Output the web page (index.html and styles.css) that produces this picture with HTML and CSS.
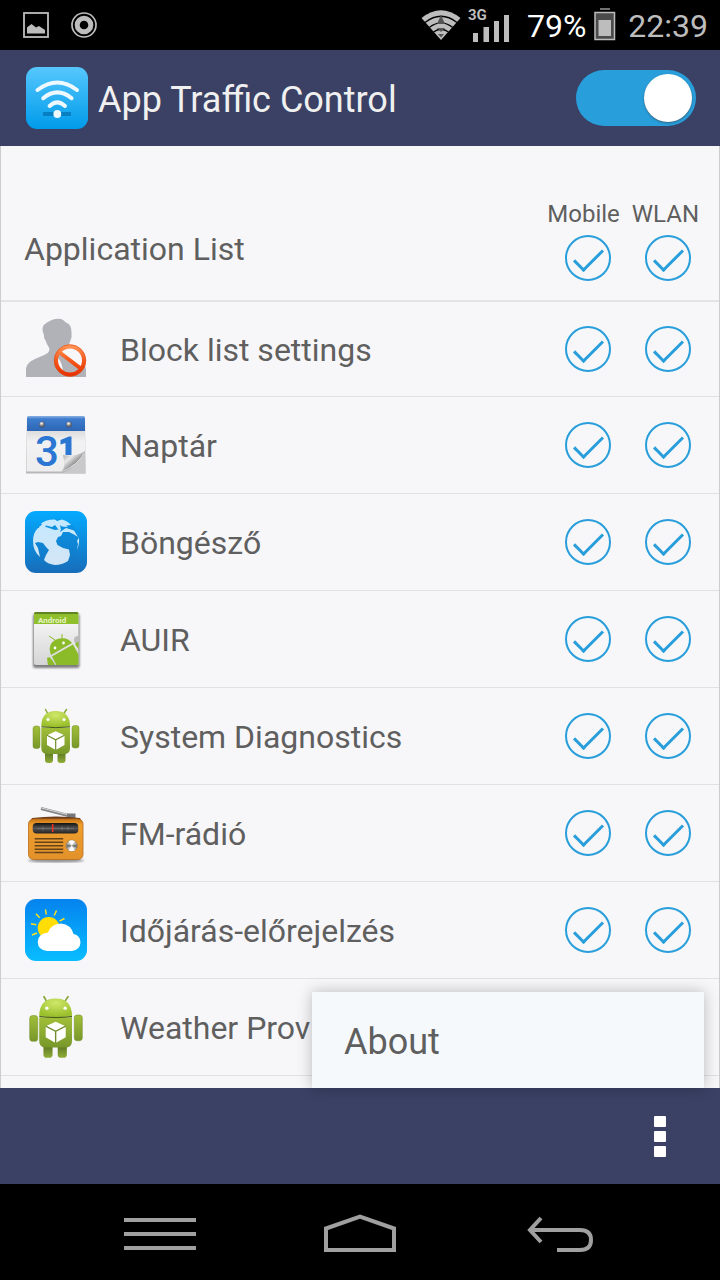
FILE: index.html
```html
<!DOCTYPE html>
<html lang="en">
<head>
<meta charset="utf-8">
<meta name="viewport" content="width=device-width, initial-scale=1">
<title>App Traffic Control</title>
<link rel="stylesheet" href="styles.css">
</head>
<body>
<div class="status">
  <div class="status-group notices">
    <svg width="26" height="26" viewBox="0 0 26 26" aria-hidden="true"><rect x="1" y="1" width="24" height="24" fill="none" stroke="#bdbdbd" stroke-width="1.8"/><path d="M4 21.500V15.500l4.500-3.500 4.500 3.500 3-1.500 6 4v3.500z" fill="#bdbdbd"/></svg>
    <svg width="26" height="26" viewBox="0 0 26 26" aria-hidden="true" fill="none" stroke="#bdbdbd"><circle cx="13" cy="13" r="12" stroke-width="1.700"/><circle cx="13" cy="13" r="6.800" stroke-width="5"/></svg>
  </div>
  <div class="status-group">
    <svg class="wifi" width="40" height="32" viewBox="0 0 40 32" aria-hidden="true">
      <path d="M.5 9Q20-6.500 39.500 9L20 31z" fill="#bdbdbd"/>
      <path d="M4 13.500Q20 1 36 13.500M8.500 18.300Q20 9.500 31.500 18.300M12.500 23Q20 17.500 27.500 23" fill="none" stroke="#000" stroke-width="1.300"/>
      <path d="M20 6l4 9h-8zM16 19h8l-4 4zM17 25h6l-3 3.500z" fill="#555"/>
    </svg>
    <svg class="signal" width="44" height="36" viewBox="0 0 44 36" aria-label="3G"><text x="1" y="13" class="net">3G</text><path d="M6 26h5v9H6zM16.500 20h5.500v15h-5.500zM27 14h5v21h-5zM37 8h5v27h-5z" fill="#bdbdbd"/></svg>
    <span class="percent">79%</span>
    <svg class="battery" width="22" height="34" viewBox="0 0 22 34" aria-hidden="true"><path d="M6 1h10" stroke="#bdbdbd" stroke-width="1.200"/><rect x="1" y="4.500" width="19.500" height="27" fill="#4b4b4b" stroke="#bdbdbd" stroke-width="1.500"/><rect x="4.500" y="12" width="12.500" height="16" fill="#bdbdbd"/></svg>
    <time class="clock">22:39</time>
  </div>
</div>

<header class="bar">
  <svg width="62" height="62" viewBox="0 0 62 62" aria-hidden="true">
    <defs><linearGradient id="gWifi" x2="0" y2="1"><stop stop-color="#56c7fd"/><stop offset="1" stop-color="#009bea"/></linearGradient></defs>
    <rect width="62" height="62" rx="11" fill="url(#gWifi)"/>
    <path d="M17 45h28v4H17z" fill="#0680c0"/>
    <path d="M11.500 23Q31.300 8 51 23M17.200 31.200Q31.300 19.500 45.600 31.200M23.600 39Q31.300 31.800 39 39" fill="none" stroke="#eef8ff" stroke-width="4" stroke-linecap="round"/>
    <circle cx="31.300" cy="47" r="3.900" fill="#eef8ff"/>
  </svg>
  <h1 class="title">App Traffic Control</h1>
  <input class="switch" type="checkbox" role="switch" aria-label="App Traffic Control" checked>
</header>

<main class="list">
  <div class="head">
    <h2 class="name">Application List</h2>
    <div class="head-checks">
      <div class="labels"><label for="all-m">Mobile</label><label for="all-w">WLAN</label></div>
      <div class="checks"><input id="all-m" class="tick" type="checkbox" checked><input id="all-w" class="tick" type="checkbox" checked></div>
    </div>
  </div>
  <ul class="rows">
    <li class="row">
      <svg class="icon" viewBox="0 0 64 64" aria-hidden="true">
        <defs><linearGradient id="gNo" x2="0" y2="1"><stop stop-color="#ff9152"/><stop offset=".5" stop-color="#f4581c"/><stop offset="1" stop-color="#e93203"/></linearGradient></defs>
        <path d="M2 60V52C3 43 15 41 22 37Q26 35 25.300 31Q22.500 27 21.500 23.500Q19.500 21 20 18.500Q16 9 23 5.500Q30 .5 37 2Q40 3 42 5.500Q47.500 7 47.500 15Q48.500 20 46 25L43.500 31Q43 36 48 38Q61 42 62 52V60z" fill="#b1b2b7"/>
        <circle cx="46" cy="43.500" r="13" fill="#f7f7fa"/>
        <path d="M32.500 40Q38 43 39 55Q44 58.500 52 55L56 53L37 36z" fill="#b1b2b7"/>
        <path d="M46 43.500m-14 0a14 14 0 1 0 28 0a14 14 0 1 0-28 0M35.700 35.500l21 16" fill="none" stroke="url(#gNo)" stroke-width="4"/>
        <circle cx="46" cy="43.500" r="15.800" fill="none" stroke="#d84a16" stroke-width=".6"/>
      </svg>
      <span class="name">Block list settings</span>
      <div class="checks"><input class="tick" type="checkbox" aria-label="Block list settings, Mobile" checked><input class="tick" type="checkbox" aria-label="Block list settings, WLAN" checked></div>
    </li>
    <li class="row">
      <svg class="icon" viewBox="0 0 64 64" aria-hidden="true">
        <defs>
          <linearGradient id="gPage" x2="0" y2="1"><stop stop-color="#d9d9da"/><stop offset=".3" stop-color="#f2f2f2"/><stop offset="1" stop-color="#ededee"/></linearGradient>
          <linearGradient id="gCurl" x2="1" y2="1"><stop stop-color="#8b8b8b"/><stop offset=".35" stop-color="#e8e8e8"/><stop offset=".6" stop-color="#8d8d8d"/><stop offset="1" stop-color="#dedede"/></linearGradient>
          <linearGradient id="gBlue" x2="0" y2="1"><stop stop-color="#8bb0e4"/><stop offset=".2" stop-color="#3d7ccd"/><stop offset="1" stop-color="#2d66b5"/></linearGradient>
          <radialGradient id="gPin" cx=".4" cy=".3"><stop stop-color="#fff"/><stop offset="1" stop-color="#666"/></radialGradient>
        </defs>
        <path d="M3 4.500Q3 3 5 3H59Q61 3 61 5L61.500 60.500H2z" fill="#b7b7b9"/>
        <path d="M3 16H61V38Q56 52 38 58.500H2.500z" fill="url(#gPage)"/>
        <path d="M3 5Q3 3 5 3H59Q61 3 61 5V18H3z" fill="url(#gBlue)"/>
        <circle cx="18" cy="11.500" r="3" fill="url(#gPin)" stroke="#24539a" stroke-width=".5"/><circle cx="45" cy="11.500" r="3" fill="url(#gPin)" stroke="#24539a" stroke-width=".5"/>
        <text x="11" y="53" class="day">3</text>
        <path d="M36.500 27L45 23.500H47.500V42H41.500V30L36.500 31.500z" fill="#2a76d2"/>
        <path d="M61 38L61.500 60.500H38Q56 52 61 38z" fill="#c9c9cb"/>
        <path d="M61 38Q52 44 39 42Q42 55 37.500 58.500Q54 52 61 38z" fill="url(#gCurl)"/>
      </svg>
      <span class="name">Naptár</span>
      <div class="checks"><input class="tick" type="checkbox" aria-label="Naptár, Mobile" checked><input class="tick" type="checkbox" aria-label="Naptár, WLAN" checked></div>
    </li>
    <li class="row">
      <svg class="icon" viewBox="0 0 64 64" aria-hidden="true">
        <defs><linearGradient id="gWeb" x2="0" y2="1"><stop stop-color="#04aaff"/><stop offset="1" stop-color="#176db9"/></linearGradient><linearGradient id="gLand" x2="0" y2="1"><stop stop-color="#c4e9ff"/><stop offset="1" stop-color="#d3e5f5"/></linearGradient></defs>
        <rect x="1" y="1" width="62" height="62" rx="11" fill="url(#gWeb)"/>
        <circle cx="32" cy="32" r="23" fill="#1279c9" opacity=".3"/>
        <path d="M15 17L18 14.500L17 13.500Q23 9 31 9.500L33 11L38 9.500Q44 11 47 15L42 15.500L44 17L38 16.500L36 15L37 20L34 19L31 15L28 17L22 15.500L20 19L15 19zM14 18L22 17L31 20L37 19L36 22L42 18L50 20.500L54 27L50 24.500L45 22L39 22L37 26L34 27L32 31L33.500 35L39 38L45 39.500L46 45L44 51Q38 55 31 55Q23 54 20 50L22 45L25 40L22 37L19 33L14 32L11 33L14 38L16 47Q9 41 9 31Q9 23 14 18zM53 31L55 27.500Q55.500 35 53 40L54 34z" fill="url(#gLand)"/>
      </svg>
      <span class="name">Böngésző</span>
      <div class="checks"><input class="tick" type="checkbox" aria-label="Böngésző, Mobile" checked><input class="tick" type="checkbox" aria-label="Böngésző, WLAN" checked></div>
    </li>
    <li class="row">
      <svg class="icon" viewBox="0 0 64 64" aria-hidden="true">
        <defs><linearGradient id="gDoc" x2="0" y2="1"><stop stop-color="#fbfbfb"/><stop offset="1" stop-color="#d4d4d4"/></linearGradient><clipPath id="cDoc"><rect x="10" y="5" width="44.500" height="53" rx="2"/></clipPath><filter id="soft"><feGaussianBlur stdDeviation="1.200"/></filter></defs>
        <rect x="9" y="7" width="46.500" height="54" rx="2" fill="#555" opacity=".75" filter="url(#soft)"/>
        <g clip-path="url(#cDoc)">
          <path d="M9 5h47v54H9z" fill="url(#gDoc)"/>
          <path d="M9 5h47v12H9z" fill="#8fc02b"/><path d="M9 5h47v2H9z" fill="#5f8421"/>
          <text x="14" y="16" class="tiny">Android</text>
          <circle cx="54" cy="33" r="4" fill="#bbb"/>
          <g fill="#8bbb28"><path d="M27 48Q23 37 32 32.500Q43 29 48 36z"/><path d="M28 49.500L49 37.500L56 50V59H33z"/><path d="M23 51Q26 49 28 53L32 59H24z"/><path d="M51 37L55 34V43z"/><path d="M31 33L25 29M38 33V27" stroke="#8bbb28"/></g>
          <circle cx="31" cy="41" r="1.400" fill="#fff"/><circle cx="39.500" cy="36" r="1.400" fill="#fff"/>
        </g>
      </svg>
      <span class="name">AUIR</span>
      <div class="checks"><input class="tick" type="checkbox" aria-label="AUIR, Mobile" checked><input class="tick" type="checkbox" aria-label="AUIR, WLAN" checked></div>
    </li>
    <li class="row">
      <svg class="icon" viewBox="0 0 64 64" aria-hidden="true">
        <defs>
          <linearGradient id="gBot" x2="0" y2="1"><stop stop-color="#a2bf38"/><stop offset="1" stop-color="#77972a"/></linearGradient>
          <radialGradient id="gHead" cx=".5" cy=".25" r=".7"><stop stop-color="#cfe76a"/><stop offset="1" stop-color="#9ac02b"/></radialGradient>
          <linearGradient id="gLeg" x2="0" y2="1"><stop stop-color="#4f681c"/><stop offset="1" stop-color="#91ae38"/></linearGradient>
          <symbol id="robot" viewBox="0 0 64 64" overflow="visible">
            <path d="M24 10L21.500 5.500M39.500 10L42.500 5.500" stroke="#8aa53a" stroke-width="1.500" stroke-linecap="round"/>
            <rect x="21" y="46" width="8" height="13" rx="3" fill="url(#gLeg)"/><rect x="33.500" y="46" width="8" height="13" rx="3" fill="url(#gLeg)"/>
            <rect x="9" y="22" width="7" height="22.500" rx="2.500" fill="url(#gBot)" stroke="#73912b" stroke-width=".5"/><rect x="48" y="21.500" width="7" height="22.500" rx="2.500" fill="url(#gBot)" stroke="#73912b" stroke-width=".5"/>
            <path d="M17.300 23.500H46V44Q46 50 40 50H23.500Q17.300 50 17.300 44z" fill="url(#gBot)"/>
            <path d="M17.300 22.500Q17.300 7 31.700 7Q46 7 46 22.500Q32 24 17.300 22.500z" fill="url(#gHead)"/>
            <path d="M17.500 22.800Q32 24.500 46 22.800" fill="none" stroke="#40551a" stroke-width="1"/>
            <circle cx="24" cy="15.500" r="1.500" fill="#fff"/><circle cx="40" cy="15.500" r="1.500" fill="#fff"/>
            <path d="M31.700 27.300L40.500 31.300V41L31.700 46L23 41V31.300z" fill="#fff"/>
            <path d="M23 31.300L31.700 35.800L40.500 31.300M31.700 35.800V46" fill="none" stroke="#6f8c2a" stroke-width="1.200"/>
          </symbol>
        </defs>
        <use href="#robot" width="64" height="64"/>
      </svg>
      <span class="name">System Diagnostics</span>
      <div class="checks"><input class="tick" type="checkbox" aria-label="System Diagnostics, Mobile" checked><input class="tick" type="checkbox" aria-label="System Diagnostics, WLAN" checked></div>
    </li>
    <li class="row">
      <svg class="icon" viewBox="0 0 64 64" aria-hidden="true">
        <defs><linearGradient id="gRad" x2="0" y2="1"><stop stop-color="#c87316"/><stop offset=".15" stop-color="#efa02d"/><stop offset="1" stop-color="#e2912a"/></linearGradient><linearGradient id="gDial" x2="0" y2="1"><stop stop-color="#111"/><stop offset=".5" stop-color="#555"/><stop offset="1" stop-color="#222"/></linearGradient></defs>
        <ellipse cx="32" cy="59.500" rx="28" ry="2" fill="#555" opacity=".65" filter="url(#soft)"/>
        <path d="M17 7.500L48 15.500" stroke="#858585" stroke-width="3"/><path d="M17.500 7L45 14" stroke="#d9d9d9" stroke-width="1"/>
        <path d="M43 12.500h8.500V17H43z" fill="#777"/><path d="M8 17Q32 14 56 17L58 21H6z" fill="#6b3b1e"/>
        <rect x="4.500" y="18" width="54.500" height="40.500" rx="5" fill="url(#gRad)" stroke="#b66c19" stroke-width=".8"/>
        <rect x="8.700" y="22" width="45.600" height="10.500" rx="4" fill="url(#gDial)"/>
        <path d="M13 27.500H50M19 25.500v4M38 25.500v4M44 25.500v4" stroke="#888" stroke-width=".5"/><path d="M28.700 23v8" stroke="#f22f24" stroke-width="1.500"/>
        <path d="M10.700 37.700h28.500M10.700 41.200h28.500M10.700 44.700h28.500M10.700 48.200h28.500M10.700 51.500h28.500" stroke="#65431b" stroke-width="1.400"/>
        <circle cx="47.700" cy="44.700" r="5.600" fill="#bcbcbc" stroke="#8c6a38" stroke-width=".6"/><path d="M47.700 44.700L44.500 40.200Q47.500 38.500 51 40.200zM47.700 44.700L44.500 49.300Q47.500 51 51 49.300z" fill="#fff"/><path d="M47.700 44.700L42.500 43v4zM47.700 44.700L53 43v4z" fill="#777"/>
      </svg>
      <span class="name">FM-rádió</span>
      <div class="checks"><input class="tick" type="checkbox" aria-label="FM-rádió, Mobile" checked><input class="tick" type="checkbox" aria-label="FM-rádió, WLAN" checked></div>
    </li>
    <li class="row">
      <svg class="icon" viewBox="0 0 64 64" aria-hidden="true">
        <defs><linearGradient id="gSky" x2="0" y2="1"><stop stop-color="#0583ef"/><stop offset="1" stop-color="#08bdff"/></linearGradient></defs>
        <rect x="1" y="1" width="62" height="62" rx="11" fill="url(#gSky)"/>
        <circle cx="24.700" cy="30" r="11" fill="#ffdd05"/>
        <path d="M21.500 11.500l.8 5M32.500 12.500l-2.300 5M12 15.800l3.600 4M40.500 20.500l-5 2.700M7 25.700l5.300 1M8 37l5-2" stroke="#ffe11b" stroke-width="1.500"/>
        <path d="M23 53Q14 52 13.700 44Q14 35.500 24 34.500Q27 26 37 25.500Q47 26.500 49.500 36Q56.500 37.500 56.500 44.500Q56 52 48 53z" fill="#fff"/>
      </svg>
      <span class="name">Időjárás-előrejelzés</span>
      <div class="checks"><input class="tick" type="checkbox" aria-label="Időjárás-előrejelzés, Mobile" checked><input class="tick" type="checkbox" aria-label="Időjárás-előrejelzés, WLAN" checked></div>
    </li>
    <li class="row">
      <svg class="icon" viewBox="4 4 56 56" aria-hidden="true"><use href="#robot" width="64" height="64"/></svg>
      <span class="name">Weather Prov</span>
      <div class="checks"><input class="tick" type="checkbox" aria-label="Weather Prov, Mobile" checked><input class="tick" type="checkbox" aria-label="Weather Prov, WLAN" checked></div>
    </li>
  </ul>
</main>

<footer class="tools">
  <div class="menu" role="menu"><button class="menu-item" role="menuitem">About</button></div>
  <button class="more" aria-label="More options"><i class="dot"></i><i class="dot"></i><i class="dot"></i></button>
</footer>

<nav class="nav">
  <button class="key" aria-label="Menu"><svg width="72" height="40" viewBox="0 0 72 40"><path d="M0 6h72M0 20h72M0 34h72"/></svg></button>
  <button class="key" aria-label="Home"><svg width="72" height="40" viewBox="0 0 72 40"><path d="M2 36V14.500L36 2.500L70 14.500V36z"/></svg></button>
  <button class="key" aria-label="Back"><svg width="72" height="40" viewBox="0 0 72 40"><path d="M33 36H56Q67 36 67 26Q67 16 56 16H6M17 4L6 16L17 28"/></svg></button>
</nav>
</body>
</html>
```
FILE: styles.css
```css
*, ::before { box-sizing: border-box; }

body {
  margin: 0;
  height: 100vh;
  display: flex;
  flex-direction: column;
  background: #000;
  color: #5f5f5f;
  font-family: Roboto, "Noto Sans", sans-serif;
}

button {
  border: 0;
  padding: 0;
  background: none;
  color: inherit;
  font: inherit;
}

svg { display: block; flex: none; }

h1, h2 { margin: 0; font-weight: 400; }

.status {
  height: 50px;
  flex: none;
  display: flex;
  justify-content: space-between;
  align-items: center;
  padding: 0 12px 0 23px;
  color: #bdbdbd;
  font-size: 32px;
  line-height: 40px;
}

.status-group { display: flex; align-items: center; }
.notices { gap: 22px; }
.wifi { margin-right: 6px; }
.signal { margin-right: 16px; }
.net { font: 700 15px Roboto, sans-serif; fill: #bdbdbd; }
.percent, .clock { padding-top: 2px; }
.percent { color: #fff; margin-right: 8px; }
.battery { margin-right: 12px; }

.day { font: 500 42px Roboto, sans-serif; fill: #2a76d2; }
.tiny { font: 700 8px Roboto, sans-serif; fill: #e9f5c8; }

.bar {
  height: 96px;
  flex: none;
  display: flex;
  align-items: center;
  gap: 10px;
  padding: 0 24px 0 26px;
  background: #3a4164;
}

.title {
  flex: 1;
  padding-top: 4px;
  color: #f0f0f0;
  font-size: 36px;
  line-height: 48px;
}

.switch {
  appearance: none;
  margin: 0;
  width: 120px;
  height: 56px;
  padding: 4px;
  border-radius: 28px;
  background: #289edb;
  display: flex;
  justify-content: flex-start;
}
.switch:checked { justify-content: flex-end; }
.switch::before {
  content: "";
  width: 48px;
  height: 48px;
  border-radius: 50%;
  background: #fff;
  box-shadow: 0 1px 2px rgba(60, 60, 60, .6);
}

.list {
  flex: 1;
  min-height: 0;
  overflow: hidden;
  background: #f7f7fa;
  border: solid #ccccce;
  border-width: 0 1px;
}

.head {
  display: flex;
  justify-content: space-between;
  align-items: flex-end;
  padding: 52px 20px 19px 23px;
  border-bottom: 2px solid #e3e3e5;
}
.head .name { padding-bottom: 12px; }

.head-checks { display: grid; gap: 5px; }
.head-checks .checks { padding-right: 8px; }

.labels {
  display: flex;
  gap: 12px;
  font-size: 24px;
  line-height: 32px;
}

.name {
  flex: 1;
  padding-top: 2px;
  font-size: 32px;
  line-height: 40px;
}

.rows {
  list-style: none;
  margin: 0;
  padding: 0;
}

.row {
  height: 97px;
  display: flex;
  align-items: center;
  gap: 32px;
  padding: 0 28px 0 23px;
  border-bottom: 1px solid #e1e1e3;
}
.row:first-child { height: 95px; }

.icon { width: 64px; height: 64px; }

.checks {
  display: flex;
  justify-content: flex-end;
  gap: 34px;
}

.tick {
  appearance: none;
  margin: 0;
  width: 46px;
  height: 46px;
  border: 2px solid #289edb;
  border-radius: 50%;
  display: grid;
  place-content: center;
}
.tick:checked::before {
  content: "";
  width: 29px;
  height: 15px;
  margin: 0 0 4px 1px;
  border: solid #289edb;
  border-width: 0 0 3px 3px;
  transform: rotate(-45deg);
}

.tools {
  position: relative;
  height: 96px;
  flex: none;
  display: flex;
  justify-content: flex-end;
  align-items: center;
  padding-right: 36px;
  background: #3a4164;
}

.menu {
  position: absolute;
  right: 16px;
  bottom: 100%;
  width: 392px;
  background: #f5f9fc;
  box-shadow: 0 0 14px rgba(0, 0, 0, .25);
}

.menu-item {
  width: 100%;
  padding: 26px 32px 22px;
  text-align: left;
  font-size: 36px;
  line-height: 48px;
}

.more {
  width: 48px;
  height: 64px;
  display: grid;
  place-content: center;
  gap: 4px;
}

.dot {
  width: 12px;
  height: 11px;
  border-radius: 1px;
  background: #fff;
}

.nav {
  height: 96px;
  flex: none;
  display: flex;
  align-items: center;
  padding: 4px 60px 0;
}

.key {
  flex: 1;
  height: 92px;
  display: grid;
  place-content: center;
}
.key svg {
  fill: none;
  stroke: #a0a0a0;
  stroke-width: 4;
}
```
